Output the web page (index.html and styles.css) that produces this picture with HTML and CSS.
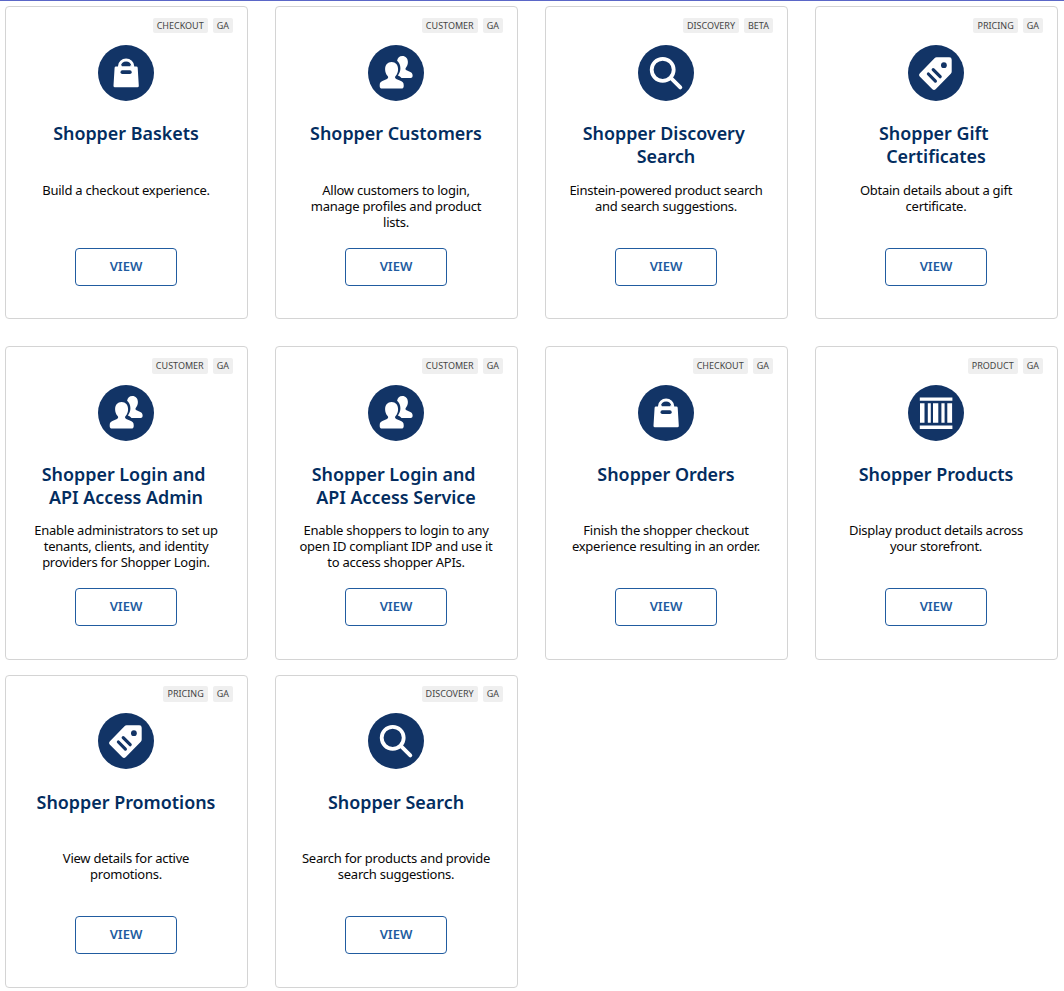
FILE: index.html
```
<!DOCTYPE html>
<html lang="en">
<head>
<meta charset="utf-8">
<title>Shopper APIs</title>
<link rel="stylesheet" href="styles.css">
</head>
<body>
<svg class="sprite" aria-hidden="true">
  <symbol id="bag" viewBox="0 0 56 56">
    <circle cx="28" cy="28" r="28" fill="#123466"/>
    <path d="M21.500 22v-1a6.600 6 0 0 1 13.200 0v1" fill="none" stroke="#fff" stroke-width="3"/>
    <path d="M18 21.500h4.500q1.300-2.500 5.600-2.500t5.600 2.500H38.300q1.300 0 1.400 1.300l1.100 18q.1 1.500-1.400 1.500H16.900q-1.500 0-1.400-1.500l1.100-18q.1-1.300 1.400-1.300z" fill="#fff"/>
    <path d="M23.800 21.300a4.300 3.800 0 0 1 8.600 0z" fill="#123466"/>
    <rect x="22.500" y="25.300" width="11.200" height="3.700" rx="1.800" fill="#123466"/>
  </symbol>
  <symbol id="people" viewBox="0 0 56 56">
    <circle cx="28" cy="28" r="28" fill="#123466"/>
    <path d="M34.300 11c3.400 0 5.600 2.500 5.600 6 0 2.300-.8 4.400-2 5.700-.8 1-.5 2 .6 2.500l3.800 1.700c1.400.7 2.300 1.800 2.300 3.300v.9c0 1.200-.8 1.900-1.900 1.900H33.500c-1-1.200-2-1.800-3.600-2.500 1.600-2.200 2.500-4.500 2.500-7.300 0-3-1.200-5.700-3.300-7.400.5-3 2.400-4.800 5.200-4.800z" fill="#fff"/>
    <path d="M23.600 17c4 0 6.500 3 6.500 7.200 0 2.800-1 5.200-2.500 6.900-.9 1.100-.7 2.300.6 2.900l4.800 2c1.800.8 2.700 2 2.700 3.900v1.300c0 1.400-.9 2.300-2.300 2.300H14c-1.400 0-2.300-.9-2.300-2.300v-1.300c0-1.900.9-3.100 2.700-3.900l4.600-2c1.300-.6 1.500-1.800.6-2.900-1.500-1.700-2.500-4.100-2.500-6.900 0-4.200 2.500-7.200 6.500-7.200z" fill="#fff"/>
  </symbol>
  <symbol id="search" viewBox="0 0 56 56">
    <circle cx="28" cy="28" r="28" fill="#123466"/>
    <circle cx="24.700" cy="24.800" r="11" fill="none" stroke="#fff" stroke-width="3.800"/>
    <path d="M33 33.200l9.300 9.200" fill="none" stroke="#fff" stroke-width="3.900" stroke-linecap="round"/>
  </symbol>
  <symbol id="tag" viewBox="0 0 56 56">
    <circle cx="28" cy="28" r="28" fill="#123466"/>
    <path d="M28.600 12.300H41.300q2.400 0 2.400 2.400V26.500q0 1.300-.9 2.200L27.600 44.300q-1.600 1.500-3.200 0L11.700 31.600q-1.500-1.600 0-3.200L26.500 13.200q.9-.9 2.100-.9z" fill="#fff"/>
    <circle cx="35.900" cy="20.200" r="2.900" fill="#123466"/>
    <path d="M20.400 29l7 7.100M25.200 24.600l7 7.100" stroke="#123466" stroke-width="3.200" stroke-linecap="round"/>
  </symbol>
  <symbol id="columns" viewBox="0 0 56 56">
    <circle cx="28" cy="28" r="28" fill="#123466"/>
    <path d="M11.800 12.400h32.600v3.400H11.800zM11.800 40.500h32.600v3.400H11.800zM12 18.300h4.500v19.400H12zM19.800 18.300h3v19.400h-3zM25 18.300h5.300v19.400H25zM33.400 18.300h3.200v19.400h-3.200zM39.300 18.300h4.800v19.400h-4.800z" fill="#fff"/>
  </symbol>
</svg>
<main class="catalog">
  <section class="row row-spaced">
    <article class="card">
      <div class="badges"><span class="badge">CHECKOUT</span><span class="badge">GA</span></div>
      <svg class="icon"><use href="#bag"/></svg>
      <h2 class="title">Shopper Baskets</h2>
      <p class="text">Build a checkout experience.</p>
      <a class="view">VIEW</a>
    </article>
    <article class="card">
      <div class="badges"><span class="badge">CUSTOMER</span><span class="badge">GA</span></div>
      <svg class="icon"><use href="#people"/></svg>
      <h2 class="title">Shopper Customers</h2>
      <p class="text">Allow customers to login,<br>manage profiles and product<br>lists.</p>
      <a class="view">VIEW</a>
    </article>
    <article class="card">
      <div class="badges"><span class="badge">DISCOVERY</span><span class="badge">BETA</span></div>
      <svg class="icon"><use href="#search"/></svg>
      <h2 class="title">Shopper Discovery&nbsp;<br>Search</h2>
      <p class="text">Einstein-powered product search<br>and search suggestions.</p>
      <a class="view">VIEW</a>
    </article>
    <article class="card">
      <div class="badges"><span class="badge">PRICING</span><span class="badge">GA</span></div>
      <svg class="icon"><use href="#tag"/></svg>
      <h2 class="title">Shopper Gift&nbsp;<br>Certificates</h2>
      <p class="text">Obtain details about a gift<br>certificate.</p>
      <a class="view">VIEW</a>
    </article>
  </section>
  <section class="row row-tall">
    <article class="card">
      <div class="badges"><span class="badge">CUSTOMER</span><span class="badge">GA</span></div>
      <svg class="icon"><use href="#people"/></svg>
      <h2 class="title">Shopper Login and&nbsp;<br>API Access Admin</h2>
      <p class="text">Enable administrators to set up<br>tenants, clients, and identity<br>providers for Shopper Login.</p>
      <a class="view">VIEW</a>
    </article>
    <article class="card">
      <div class="badges"><span class="badge">CUSTOMER</span><span class="badge">GA</span></div>
      <svg class="icon"><use href="#people"/></svg>
      <h2 class="title">Shopper Login and&nbsp;<br>API Access Service</h2>
      <p class="text">Enable shoppers to login to any<br>open ID compliant IDP and use it<br>to access shopper APIs.</p>
      <a class="view">VIEW</a>
    </article>
    <article class="card">
      <div class="badges"><span class="badge">CHECKOUT</span><span class="badge">GA</span></div>
      <svg class="icon"><use href="#bag"/></svg>
      <h2 class="title">Shopper Orders</h2>
      <p class="text">Finish the shopper checkout<br>experience resulting in an order.</p>
      <a class="view">VIEW</a>
    </article>
    <article class="card">
      <div class="badges"><span class="badge">PRODUCT</span><span class="badge">GA</span></div>
      <svg class="icon"><use href="#columns"/></svg>
      <h2 class="title">Shopper Products</h2>
      <p class="text">Display product details across<br>your storefront.</p>
      <a class="view">VIEW</a>
    </article>
  </section>
  <section class="row row-last">
    <article class="card">
      <div class="badges"><span class="badge">PRICING</span><span class="badge">GA</span></div>
      <svg class="icon"><use href="#tag"/></svg>
      <h2 class="title">Shopper Promotions</h2>
      <p class="text">View details for active<br>promotions.</p>
      <a class="view">VIEW</a>
    </article>
    <article class="card">
      <div class="badges"><span class="badge">DISCOVERY</span><span class="badge">GA</span></div>
      <svg class="icon"><use href="#search"/></svg>
      <h2 class="title">Shopper Search</h2>
      <p class="text">Search for products and provide<br>search suggestions.</p>
      <a class="view">VIEW</a>
    </article>
  </section>
</main>
</body>
</html>
```

FILE: styles.css
```
* {
  box-sizing: border-box;
}

body {
  margin: 0;
  background: #fff;
  font-family: "Noto Sans", "Open Sans", sans-serif;
  color: #080707;
}

.sprite {
  display: none;
}

.catalog {
  height: 991px;
  overflow: hidden;
  padding: 5px 0 0 5px;
  border-top: 1px solid #5b67c7;
}

.row {
  display: grid;
  grid-template-columns: repeat(4, 243px);
  column-gap: 27px;
}

.row-spaced {
  margin-bottom: 27px;
}

.row-tall {
  margin-bottom: 15px;
}

.card {
  height: 313px;
  padding: 11px 15px 0 14px;
  border: 1px solid #d4d4d4;
  border-radius: 4px;
  display: flex;
  flex-direction: column;
  align-items: center;
}

.row-tall .card {
  height: 314px;
}

.badges {
  height: 15px;
  margin-right: -1px;
  align-self: flex-end;
  display: flex;
  gap: 5px;
}

.badge {
  height: 15px;
  padding: 0 4px;
  border-radius: 2px;
  background: #efefef;
  color: #444;
  font-size: 9px;
  line-height: 15px;
}

.row-tall .badge {
  height: 16px;
  line-height: 16px;
}

.row-last .badge {
  height: 16px;
}

.row-last .badges {
  margin-top: -1px;
}

.icon {
  width: 56px;
  height: 56px;
  flex: none;
  margin-top: 12px;
}

.title {
  height: 46px;
  margin: 21px 0 0;
  color: #032d60;
  font-size: 17.9px;
  font-weight: 600;
  line-height: 23px;
  text-align: center;
  white-space: nowrap;
}

.row-tall .title,
.row-last .title {
  margin-top: 22px;
  margin-bottom: -1px;
}

.text {
  height: 48px;
  margin: 14px 0 0;
  font-size: 13px;
  line-height: 16px;
  letter-spacing: -0.25px;
  text-align: center;
  white-space: nowrap;
}

.view {
  width: 102px;
  height: 38px;
  flex: none;
  margin-top: 18px;
  border: 1px solid #215ca0;
  border-radius: 4px;
  color: #215ca0;
  font-size: 13px;
  font-weight: 600;
  line-height: 34px;
  text-align: center;
}
```
